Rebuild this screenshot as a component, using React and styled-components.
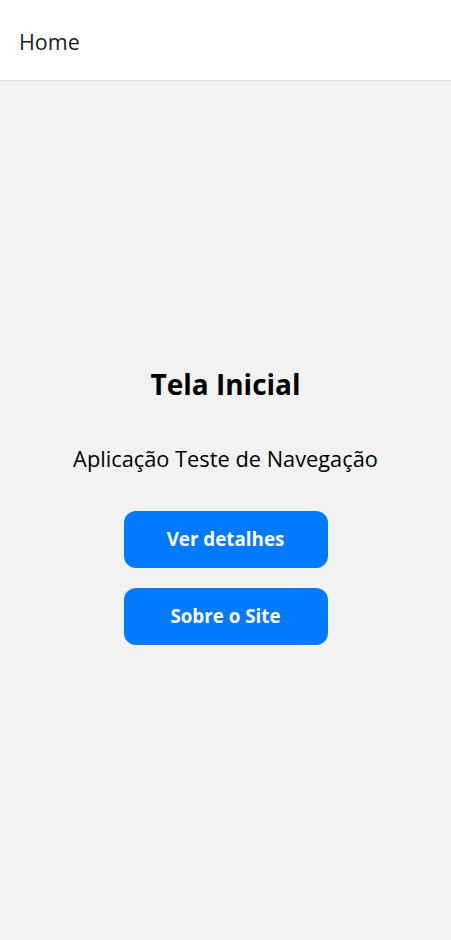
import React from 'react';
import styled, { createGlobalStyle } from 'styled-components';

const GlobalStyle = createGlobalStyle`
  html, body {
    margin: 0;
    padding: 0;
    background: #f2f2f2;
    font-family: "Open Sans", "Noto Sans", sans-serif;
  }
  #root {
    min-height: 100vh;
  }
`;

const Page = styled.div`
  min-height: 100vh;
  display: flex;
  flex-direction: column;
  background: #f2f2f2;
`;

const Header = styled.header`
  height: 81px;
  box-sizing: border-box;
  background: #fff;
  border-bottom: 1px solid #e2e2e2;
  display: flex;
  align-items: center;
  padding: 2px 19px 0;
`;

const HeaderTitle = styled.h1`
  margin: 0;
  font-size: 21.5px;
  font-weight: 500;
  color: #1c1c1e;
`;

const Main = styled.main`
  flex: 1;
  display: flex;
  flex-direction: column;
  align-items: center;
  justify-content: center;
  padding-bottom: 10px;
`;

const Title = styled.h2`
  margin: 0 0 45px;
  font-size: 28px;
  line-height: 34px;
  font-weight: 700;
  color: #000;
`;

const Subtitle = styled.p`
  margin: 0 0 39px;
  font-size: 21.8px;
  line-height: 26px;
  color: #000;
`;

const Buttons = styled.div`
  display: flex;
  flex-direction: column;
  gap: 20px;
`;

const Button = styled.button`
  width: 204px;
  height: 57px;
  border: none;
  border-radius: 12px;
  background: #007aff;
  color: #fff;
  font-family: inherit;
  font-size: 18.8px;
  font-weight: 700;
  cursor: pointer;
`;

export default function App() {
  return (
    <>
      <GlobalStyle />
      <Page>
        <Header>
          <HeaderTitle>Home</HeaderTitle>
        </Header>
        <Main>
          <Title>Tela Inicial</Title>
          <Subtitle>Aplicação Teste de Navegação</Subtitle>
          <Buttons>
            <Button>Ver detalhes</Button>
            <Button>Sobre o Site</Button>
          </Buttons>
        </Main>
      </Page>
    </>
  );
}
